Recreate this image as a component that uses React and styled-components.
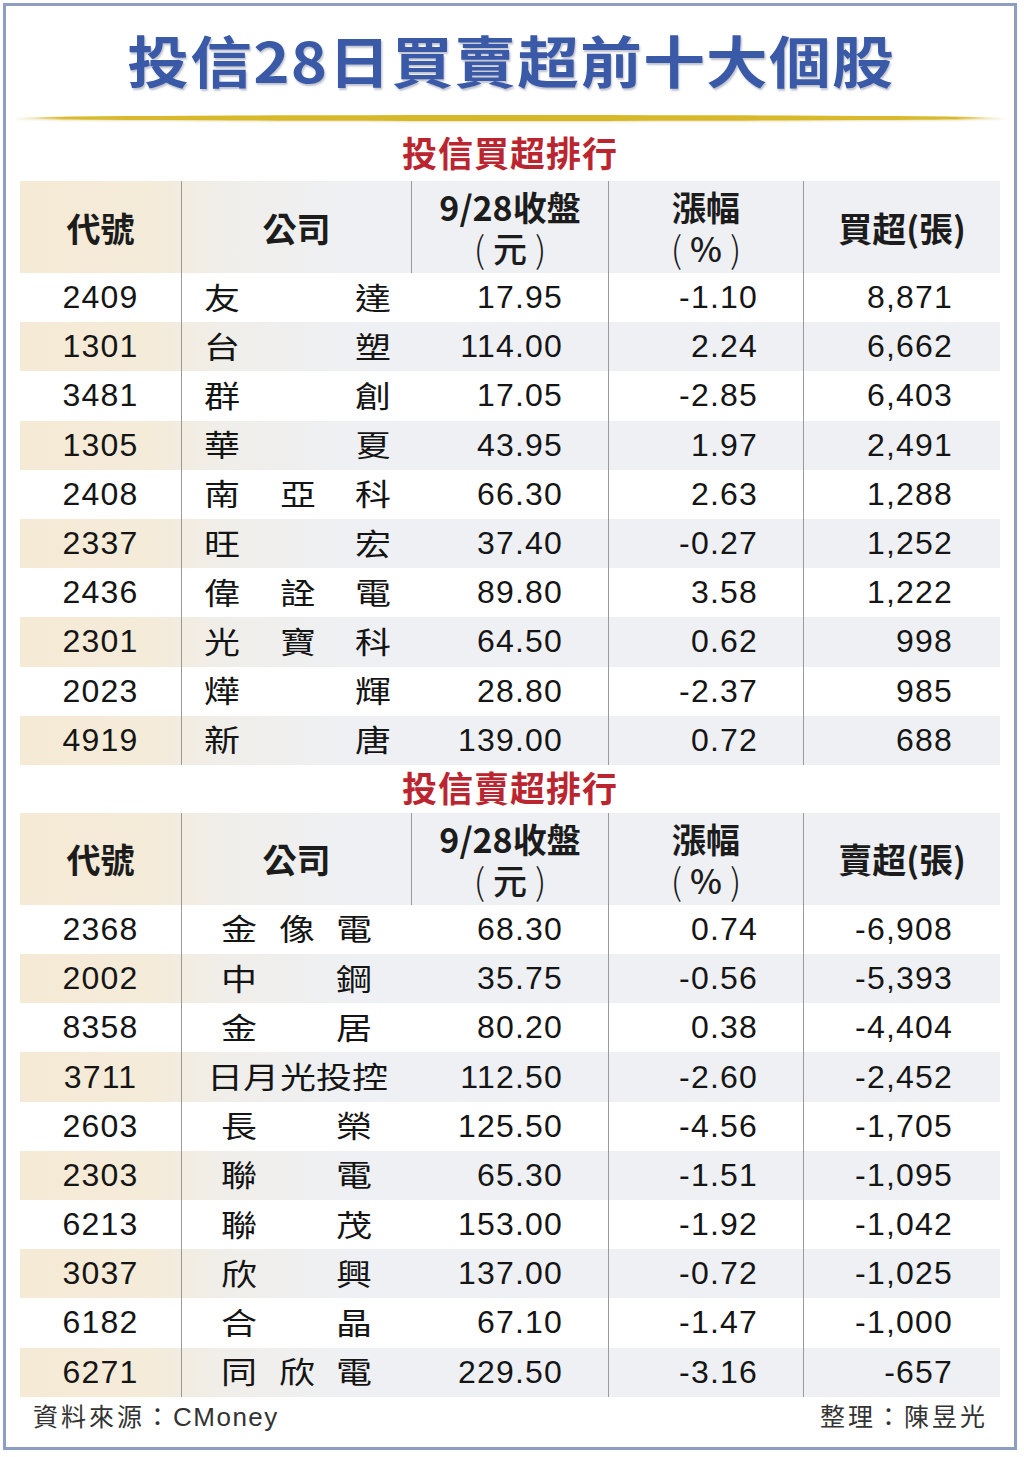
import React from 'react';
import styled, { createGlobalStyle } from 'styled-components';

const CJK = `"Noto Sans CJK TC", "Noto Sans CJK SC", "Noto Sans", sans-serif`;
const NUM = `"Liberation Sans", Arial, "Noto Sans CJK TC", sans-serif`;

const GlobalStyle = createGlobalStyle`
  html, body { margin: 0; padding: 0; background: #ffffff; }
  body { width: 1024px; height: 1457px; overflow: hidden; font-family: ${CJK}; color: #161616; }
  * { box-sizing: border-box; }
`;

const Frame = styled.div`
  width: 1014px;
  height: 1447px;
  margin: 3px 0 0 3px;
  border: 3px solid #8e9ec2;
  padding: 0 14px;
  display: flex;
  flex-direction: column;
`;

const TitleRow = styled.div`
  height: 109px;
  display: flex;
  align-items: center;
  justify-content: center;
`;

const Title = styled.h1`
  margin: 0;
  font-family: ${CJK};
  font-weight: 700;
  font-size: 56px;
  line-height: 1;
  letter-spacing: 1.2px;
  padding-left: 1.2px;
  margin-top: -4px;
  color: #3a5aa8;
  transform: scaleX(1.1);
  text-shadow: 1px 2px 2px rgba(40, 50, 90, 0.3);
  white-space: nowrap;
`;

const GoldLine = styled.div`
  height: 6px;
  margin: 0 -5px;
  border-radius: 50%;
  background: linear-gradient(
    to right,
    rgba(216, 186, 40, 0) 0%,
    #d8ba2c 5%,
    #d6b726 50%,
    #d8ba2c 95%,
    rgba(216, 186, 40, 0) 100%
  );
  box-shadow: 0 1px 2px rgba(170, 140, 20, 0.25);
`;

const SectionTitle = styled.div`
  height: ${p => p.$h}px;
  padding-bottom: ${p => p.$pb || 0}px;
  display: flex;
  align-items: center;
  justify-content: center;
  font-family: ${CJK};
  font-weight: 700;
  font-size: 35px;
  letter-spacing: 1px;
  color: #bb2530;
`;

const shade = `linear-gradient(to right, #f5ead5 0px, #f4ebd9 130px, #f0eee9 200px, #eef0f3 330px, #eef0f3 100%)`;

const Row = styled.div`
  display: grid;
  grid-template-columns: 161px 230px 197px 195px 197px;
  height: ${p => p.$h}px;
  background: ${p => (p.$shade ? shade : '#ffffff')};
`;

const Cell = styled.div`
  display: flex;
  flex-direction: column;
  align-items: ${p => p.$justify || 'center'};
  justify-content: center;
  padding-right: ${p => p.$pr || 0}px;
  & + & {
    border-left: 1px solid #9a9a9a;
  }
`;

const HeadLine = styled.div`
  display: flex;
  align-items: center;
  justify-content: center;
  font-family: ${CJK};
  font-weight: ${p => (p.$light ? 500 : 700)};
  font-size: 34px;
  height: 41px;
  line-height: 41px;
  color: #1c1c1c;
  white-space: nowrap;
`;

const Paren = styled.span`
  display: inline-block;
  font-weight: 300;
  font-size: 36px;
  margin: 0 ${p => p.$gap}px;
`;

const Num = styled.span`
  font-family: ${NUM};
  font-size: 32px;
  letter-spacing: 1.2px;
  color: #151515;
  white-space: nowrap;
`;

const NameCell = styled.div`
  display: flex;
  align-items: center;
  justify-content: space-between;
  padding: 0 ${p => p.$pr}px 0 ${p => p.$pl}px;
  border-left: 1px solid #9a9a9a;
`;

const NameChar = styled.span`
  display: inline-block;
  font-family: ${CJK};
  font-size: 30px;
  line-height: 1;
  margin-top: -4px;
  color: #151515;
  transform: scaleX(1.2);
`;

const Footer = styled.div`
  flex: 1;
  display: flex;
  align-items: flex-start;
  justify-content: space-between;
  padding: 0 12px 0 13px;
  font-family: ${CJK};
  font-size: 25px;
  color: #333333;
`;

const FootText = styled.span`
  letter-spacing: 3px;
  white-space: nowrap;
`;

const Latin = styled.span`
  font-family: ${NUM};
  font-size: 26px;
  letter-spacing: 1.5px;
`;

const buyRows = [
  ['2409', '友達', '17.95', '-1.10', '8,871'],
  ['1301', '台塑', '114.00', '2.24', '6,662'],
  ['3481', '群創', '17.05', '-2.85', '6,403'],
  ['1305', '華夏', '43.95', '1.97', '2,491'],
  ['2408', '南亞科', '66.30', '2.63', '1,288'],
  ['2337', '旺宏', '37.40', '-0.27', '1,252'],
  ['2436', '偉詮電', '89.80', '3.58', '1,222'],
  ['2301', '光寶科', '64.50', '0.62', '998'],
  ['2023', '燁輝', '28.80', '-2.37', '985'],
  ['4919', '新唐', '139.00', '0.72', '688'],
];

const sellRows = [
  ['2368', '金像電', '68.30', '0.74', '-6,908'],
  ['2002', '中鋼', '35.75', '-0.56', '-5,393'],
  ['8358', '金居', '80.20', '0.38', '-4,404'],
  ['3711', '日月光投控', '112.50', '-2.60', '-2,452'],
  ['2603', '長榮', '125.50', '-4.56', '-1,705'],
  ['2303', '聯電', '65.30', '-1.51', '-1,095'],
  ['6213', '聯茂', '153.00', '-1.92', '-1,042'],
  ['3037', '欣興', '137.00', '-0.72', '-1,025'],
  ['6182', '合晶', '67.10', '-1.47', '-1,000'],
  ['6271', '同欣電', '229.50', '-3.16', '-657'],
];

function HeaderRow({ last }) {
  return (
    <Row $h={92} $shade>
      <Cell><HeadLine>代號</HeadLine></Cell>
      <Cell><HeadLine>公司</HeadLine></Cell>
      <Cell>
        <HeadLine>9/28收盤</HeadLine>
        <HeadLine $light><Paren $gap={8}>(</Paren>元<Paren $gap={8}>)</Paren></HeadLine>
      </Cell>
      <Cell>
        <HeadLine>漲幅</HeadLine>
        <HeadLine $light><Paren $gap={8}>(</Paren>%<Paren $gap={8}>)</Paren></HeadLine>
      </Cell>
      <Cell><HeadLine>{last}</HeadLine></Cell>
    </Row>
  );
}

function DataRow({ data, index, inset }) {
  const [code, name, price, chg, vol] = data;
  let pl = 25, pr = 23;
  if (inset) {
    if (name.length >= 5) { pl = 28; pr = 26; } else { pl = 42; pr = 42; }
  }
  return (
    <Row $h={49.2} $shade={index % 2 === 1}>
      <Cell><Num>{code}</Num></Cell>
      <NameCell $pl={pl} $pr={pr}>
        {name.split('').map((c, i) => <NameChar key={i}>{c}</NameChar>)}
      </NameCell>
      <Cell $justify="flex-end" $pr={45}><Num>{price}</Num></Cell>
      <Cell $justify="flex-end" $pr={45}><Num>{chg}</Num></Cell>
      <Cell $justify="flex-end" $pr={47}><Num>{vol}</Num></Cell>
    </Row>
  );
}

export default function App() {
  return (
    <>
      <GlobalStyle />
      <Frame>
        <TitleRow><Title>投信28日買賣超前十大個股</Title></TitleRow>
        <GoldLine />
        <SectionTitle $h={60}>投信買超排行</SectionTitle>
        <HeaderRow last="買超(張)" />
        {buyRows.map((r, i) => <DataRow key={r[0]} data={r} index={i} />)}
        <SectionTitle $h={48} $pb={4}>投信賣超排行</SectionTitle>
        <HeaderRow last="賣超(張)" />
        {sellRows.map((r, i) => <DataRow key={r[0]} data={r} index={i} inset />)}
        <Footer>
          <FootText>資料來源：<Latin>CMoney</Latin></FootText>
          <FootText>整理：陳昱光</FootText>
        </Footer>
      </Frame>
    </>
  );
}
